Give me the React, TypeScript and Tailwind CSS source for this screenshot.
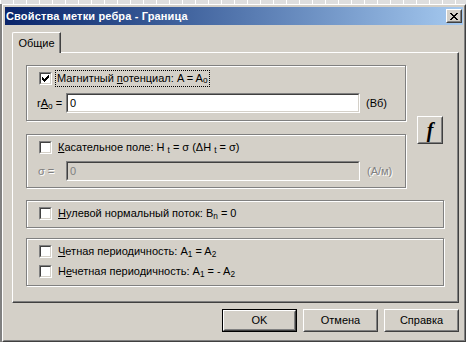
import type { ReactNode } from 'react'

const CheckMark = () => (
  <svg width="7" height="7" viewBox="0 0 7 7" shapeRendering="crispEdges">
    <rect x="6" y="0" width="1" height="1" fill="#000" />
    <rect x="5" y="1" width="2" height="1" fill="#000" />
    <rect x="0" y="2" width="1" height="1" fill="#000" />
    <rect x="4" y="2" width="3" height="1" fill="#000" />
    <rect x="0" y="3" width="2" height="1" fill="#000" />
    <rect x="3" y="3" width="3" height="1" fill="#000" />
    <rect x="0" y="4" width="5" height="1" fill="#000" />
    <rect x="1" y="5" width="3" height="1" fill="#000" />
    <rect x="2" y="6" width="1" height="1" fill="#000" />
  </svg>
)

const CloseGlyph = () => (
  <svg width="8" height="7" viewBox="0 0 8 7" shapeRendering="crispEdges">
    <rect x="0" y="0" width="2" height="1" fill="#000" />
    <rect x="6" y="0" width="2" height="1" fill="#000" />
    <rect x="1" y="1" width="2" height="1" fill="#000" />
    <rect x="5" y="1" width="2" height="1" fill="#000" />
    <rect x="2" y="2" width="4" height="1" fill="#000" />
    <rect x="3" y="3" width="2" height="1" fill="#000" />
    <rect x="2" y="4" width="4" height="1" fill="#000" />
    <rect x="1" y="5" width="2" height="1" fill="#000" />
    <rect x="5" y="5" width="2" height="1" fill="#000" />
    <rect x="0" y="6" width="2" height="1" fill="#000" />
    <rect x="6" y="6" width="2" height="1" fill="#000" />
  </svg>
)

function Check({ checked }: { checked?: boolean }) {
  return (
    <div className="w-[13px] h-[13px] shrink-0 border border-t-[#808080] border-l-[#808080] border-r-white border-b-white">
      <div className="w-full h-full flex items-center justify-center bg-white border border-t-[#404040] border-l-[#404040] border-r-[#d4d0c8] border-b-[#d4d0c8]">
        {checked && <CheckMark />}
      </div>
    </div>
  )
}

function Field({ value, disabled }: { value: string; disabled?: boolean }) {
  return (
    <div className="w-[294px] h-[20px] shrink-0 border border-t-[#808080] border-l-[#808080] border-r-white border-b-white">
      <div
        className={
          disabled
            ? 'h-full flex items-center pl-[2px] bg-[#d4d0c8] text-[#808080] border border-t-[#404040] border-l-[#404040] border-r-[#d4d0c8] border-b-[#d4d0c8]'
            : 'h-full flex items-center pl-[2px] bg-white border border-t-[#404040] border-l-[#404040] border-r-[#d4d0c8] border-b-[#d4d0c8]'
        }
      >
        {value}
      </div>
    </div>
  )
}

function CheckRow({ checked, children }: { checked?: boolean; children: ReactNode }) {
  return (
    <div className="h-[17px] flex items-center gap-[6px]">
      <Check checked={checked} />
      <span className="whitespace-nowrap">{children}</span>
    </div>
  )
}

function Button({ children, isDefault }: { children: ReactNode; isDefault?: boolean }) {
  return (
    <div className={isDefault ? 'w-[75px] h-[23px] border border-black' : 'w-[75px] h-[23px]'}>
      <div className="w-full h-full border border-t-white border-l-white border-r-[#404040] border-b-[#404040]">
        <div className="w-full h-full flex items-center justify-center border border-transparent border-r-[#808080] border-b-[#808080]">
          {children}
        </div>
      </div>
    </div>
  )
}

export default function App() {
  return (
    <div className="w-[466px] h-[342px] flex flex-col overflow-hidden bg-[#d4d0c8] text-black text-[11px] leading-[13px] font-['Liberation_Sans',Arial,sans-serif]">
      {/* window behind the dialog */}
      <div className="h-[4px] shrink-0 bg-[#dedede] bg-[image:repeating-linear-gradient(90deg,#ffffff_0px,#ffffff_1px,transparent_1px,transparent_13px)]" />

      <div className="flex flex-1 min-h-0">
        <div className="w-[2px] shrink-0 bg-[#808080]" />
        <div className="flex flex-1 border border-t-white border-l-white border-r-[#404040] border-b-[#404040]">
          <div className="flex flex-1 flex-col p-px border border-t-[#d4d0c8] border-l-[#d4d0c8] border-r-[#808080] border-b-[#808080]">
            {/* title bar */}
            <div className="h-[18px] shrink-0 flex items-center justify-between pl-px pr-px bg-linear-to-r from-[#0a246a] to-[#a6caf0]">
              <span className="font-bold text-white whitespace-nowrap tracking-[0.15px]">Свойства метки ребра - Граница</span>
              <div className="w-[16px] h-[14px] border border-t-white border-l-white border-r-[#404040] border-b-[#404040]">
                <div className="w-full h-full flex items-center justify-center bg-[#d4d0c8] border border-transparent border-r-[#808080] border-b-[#808080]">
                  <CloseGlyph />
                </div>
              </div>
            </div>

            <div className="flex flex-col pl-[7px] pr-[4px] pt-[7px]">
              {/* tab */}
              <div className="relative z-10 -mb-px w-[49px] h-[21px] flex justify-center pt-[4px] bg-[#d4d0c8] rounded-tl-[2px] border-t border-l border-r border-t-white border-l-white border-r-[#404040] shadow-[inset_-1px_0_0_#808080]">
                Общие
              </div>

              {/* tab page */}
              <div className="h-[251px] flex flex-col pl-[13px] pt-[12px] border border-t-white border-l-white border-r-[#404040] border-b-[#404040] shadow-[inset_-1px_-1px_0_#808080]">
                <div className="flex">
                  <div className="flex flex-col w-[380px]">
                    <div className="h-[56px] pl-[12px] pt-[4px] border border-[#808080] shadow-[inset_1px_1px_0_#fff,1px_1px_0_#fff]">
                      <div className="h-[17px] flex items-center">
                        <Check checked />
                        <span className="ml-[3px] px-px h-[17px] flex items-center border border-dotted border-black whitespace-nowrap">
                          Магнитный&nbsp;<u>п</u>отенциал: A = A<sub>o</sub>
                        </span>
                      </div>
                      <div className="mt-[6px] -ml-[2px] h-[20px] flex items-center">
                        <span className="w-[29px] shrink-0 whitespace-nowrap">
                          r<u>A</u><sub>o</sub> =
                        </span>
                        <Field value="0" />
                        <span className="ml-[6px]">(Вб)</span>
                      </div>
                    </div>

                    <div className="mt-[13px] h-[54px] pl-[12px] pt-[4px] border border-[#808080] shadow-[inset_1px_1px_0_#fff,1px_1px_0_#fff]">
                      <CheckRow>
                        <u>К</u>асательное поле: H<sub className="ml-[3px]">t</sub> = σ (ΔH<sub className="ml-[3px]">t</sub> = σ)
                      </CheckRow>
                      <div className="mt-[5px] -ml-px h-[20px] flex items-center">
                        <span className="w-[28px] shrink-0 text-[#808080] [text-shadow:1px_1px_0_#fff]">σ =</span>
                        <Field value="0" disabled />
                        <span className="ml-[7px] text-[#808080] [text-shadow:1px_1px_0_#fff]">(А/м)</span>
                      </div>
                    </div>
                  </div>

                  <div className="ml-[11px] mt-[51px] w-[26px] h-[28px] border border-t-white border-l-white border-r-[#404040] border-b-[#404040]">
                    <div className="w-full h-full flex items-center justify-center border border-transparent border-r-[#808080] border-b-[#808080] font-['Liberation_Serif',serif] font-bold italic text-[20px]">
                      f
                    </div>
                  </div>
                </div>

                <div className="mt-[12px] w-[418px] h-[28px] pl-[12px] pt-[4px] border border-[#808080] shadow-[inset_1px_1px_0_#fff,1px_1px_0_#fff]">
                  <CheckRow>
                    <u>Н</u>улевой нормальный поток: B<sub>n</sub> = 0
                  </CheckRow>
                </div>

                <div className="mt-[10px] w-[418px] h-[48px] pl-[12px] pt-[4px] border border-[#808080] shadow-[inset_1px_1px_0_#fff,1px_1px_0_#fff]">
                  <CheckRow>
                    <u>Ч</u>етная периодичность: A<sub>1</sub> = A<sub>2</sub>
                  </CheckRow>
                  <div className="mt-[3px]">
                    <CheckRow>
                      Н<u>е</u>четная периодичность: A<sub>1</sub> = - A<sub>2</sub>
                    </CheckRow>
                  </div>
                </div>
              </div>

              {/* buttons */}
              <div className="mt-[6px] flex justify-end gap-[6px]">
                <Button isDefault>OK</Button>
                <Button>Отмена</Button>
                <Button>Справка</Button>
              </div>
            </div>
          </div>
        </div>
      </div>
    </div>
  )
}
